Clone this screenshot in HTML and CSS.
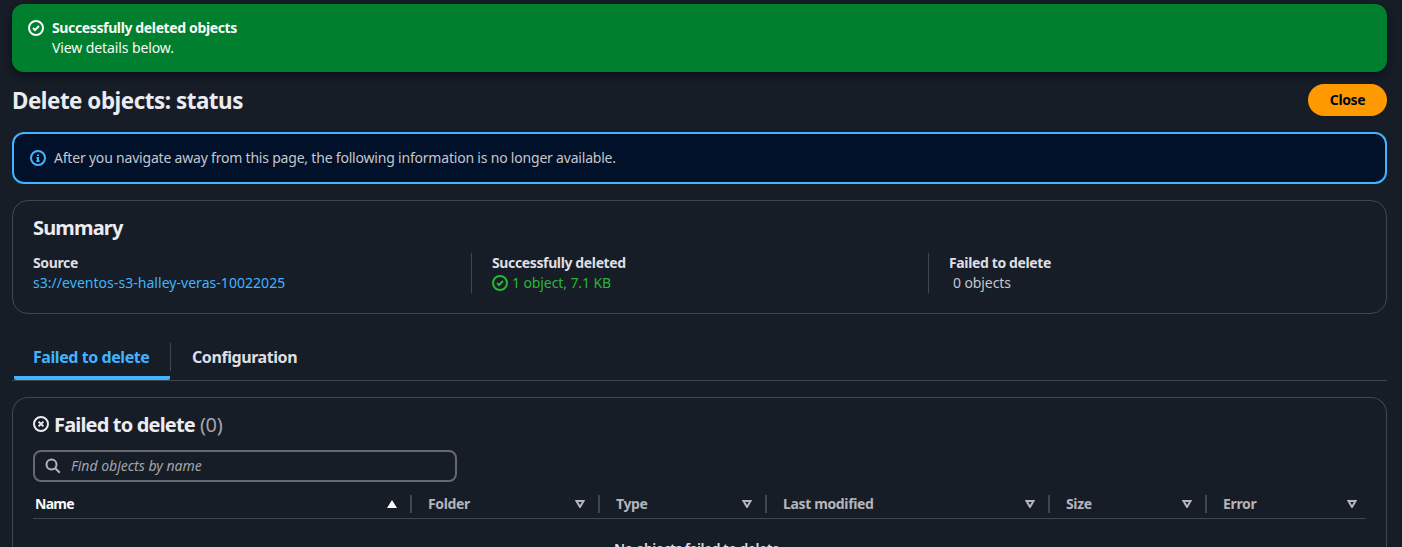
FILE: index.html
```html
<!DOCTYPE html>
<html lang="en">
<head>
<meta charset="utf-8">
<title>Delete objects: status</title>
<link rel="stylesheet" href="styles.css">
</head>
<body>
<main class="page">
  <section class="flash">
    <svg class="icon" viewBox="0 0 16 16"><circle cx="8" cy="8" r="7"/><path d="m5 8 2 2 4-4"/></svg>
    <div>
      <div class="flash-title">Successfully deleted objects</div>
      <div class="flash-text">View details below.</div>
    </div>
  </section>

  <header class="page-header">
    <h1>Delete objects: status</h1>
    <button class="close">Close</button>
  </header>

  <section class="alert">
    <svg class="icon" viewBox="0 0 16 16"><circle cx="8" cy="8" r="7"/><path d="M8 11V8H6.500M6.500 11h3M8 6V4.500"/></svg>
    <span>After you navigate away from this page, the following information is no longer available.</span>
  </section>

  <section class="summary">
    <h2>Summary</h2>
    <div class="facts">
      <div class="fact">
        <div class="label">Source</div>
        <a class="link">s3://eventos-s3-halley-veras-10022025</a>
      </div>
      <div class="fact">
        <div class="label">Successfully deleted</div>
        <div class="success"><svg class="icon" viewBox="0 0 16 16"><circle cx="8" cy="8" r="7"/><path d="m5 8 2 2 4-4"/></svg><span>1 object, 7.1 KB</span></div>
      </div>
      <div class="fact">
        <div class="label">Failed to delete</div>
        <div class="none">0 objects</div>
      </div>
    </div>
  </section>

  <nav class="tabs">
    <div class="tab active">Failed to delete</div>
    <div class="tab">Configuration</div>
  </nav>

  <section class="panel">
    <h2 class="panel-title">
      <svg class="icon" viewBox="0 0 16 16"><circle cx="8" cy="8" r="7"/><path d="m5.600 5.600 4.800 4.800M10.400 5.600l-4.800 4.800"/></svg>
      <span>Failed to delete</span>
      <span class="count">(0)</span>
    </h2>
    <div class="search">
      <svg class="icon" viewBox="0 0 16 16"><circle cx="6.500" cy="6.500" r="5"/><path d="m10.200 10.200 4.600 4.600"/></svg>
      <span>Find objects by name</span>
    </div>
    <div class="thead">
      <div class="th sorted">Name<svg class="arrow" viewBox="0 0 10 8"><path d="M5 0 10 8H0z"/></svg></div>
      <div class="th">Folder<svg class="arrow" viewBox="0 0 10 8"><path d="M1.500 1h7L5 7z"/></svg></div>
      <div class="th">Type<svg class="arrow" viewBox="0 0 10 8"><path d="M1.500 1h7L5 7z"/></svg></div>
      <div class="th">Last modified<svg class="arrow" viewBox="0 0 10 8"><path d="M1.500 1h7L5 7z"/></svg></div>
      <div class="th">Size<svg class="arrow" viewBox="0 0 10 8"><path d="M1.500 1h7L5 7z"/></svg></div>
      <div class="th">Error<svg class="arrow" viewBox="0 0 10 8"><path d="M1.500 1h7L5 7z"/></svg></div>
    </div>
    <div class="empty">No objects failed to delete</div>
  </section>
</main>
</body>
</html>
```

FILE: styles.css
```css
* { box-sizing: border-box; }
body {
  margin: 0;
  height: 547px;
  overflow: hidden;
  background: #161d26;
  color: #c6c6cd;
  font: 14px/20px "Noto Sans", "Open Sans", sans-serif;
  white-space: nowrap;
}
h1, h2 { margin: 0; color: #ebebf0; }
.page { width: 1375px; height: 543px; margin: 4px 0 0 12px; overflow: visible; }
.icon {
  width: 16px;
  height: 16px;
  flex: none;
  fill: none;
  stroke: currentColor;
  stroke-width: 2;
}
.flash {
  display: flex;
  gap: 8px;
  height: 68px;
  padding: 14px 16px;
  border-radius: 12px;
  background: #00802f;
  color: #f9f9fa;
  box-shadow: 0 4px 8px rgba(0, 7, 22, .5);
}
.flash .icon { margin-top: 2px; }
.flash-title { font-weight: 700; letter-spacing: -.37px; }
.flash-text { letter-spacing: -.1px; }
.page-header {
  display: flex;
  justify-content: space-between;
  align-items: center;
  height: 32px;
  margin: 12px 0 16px;
}
h1 {
  font-size: 24px;
  line-height: 30px;
  letter-spacing: -.5px;
  transform: scaleX(.932);
  transform-origin: left;
}
.close {
  width: 79px;
  height: 32px;
  padding: 0;
  border: 0;
  border-radius: 16px;
  background: #ff9900;
  color: #000716;
  font: inherit;
  font-weight: 700;
  letter-spacing: -.4px;
}
.alert {
  display: flex;
  align-items: center;
  gap: 8px;
  height: 52px;
  padding: 0 16px;
  border: 2px solid #42b4ff;
  border-radius: 12px;
  background: #001129;
  letter-spacing: -.2px;
}
.alert .icon { color: #42b4ff; }
.summary {
  height: 114px;
  margin-top: 16px;
  padding: 15px 20px;
  border: 1px solid #424650;
  border-radius: 16px;
}
h2 { font-size: 20px; line-height: 24px; letter-spacing: -.83px; }
.facts { display: grid; grid-template-columns: 438px 457px 1fr; margin-top: 13px; }
.fact { height: 40px; }
.fact + .fact { padding-left: 20px; border-left: 1px solid #424650; }
.label { font-weight: 700; color: #dedee3; letter-spacing: -.37px; }
.link { color: #42b4ff; letter-spacing: .04px; }
.success { display: flex; align-items: center; gap: 4px; color: #2bb534; letter-spacing: -.1px; }
.none { padding-left: 4px; letter-spacing: -.1px; }
.tabs {
  display: flex;
  height: 52px;
  margin-top: 15px;
  border-bottom: 1px solid #424650;
  font-size: 16px;
  font-weight: 700;
  letter-spacing: -.43px;
  color: #dedee3;
}
.tab { display: flex; height: 28px; margin-top: 14px; align-items: center; padding: 0 21px; }
.tab.active {
  width: 156px;
  height: 51px;
  margin: 0 0 0 2px;
  padding: 9px 0 0 19px;
  border-bottom: 4px solid #42b4ff;
  border-radius: 2px;
  color: #42b4ff;
}
.tab + .tab { border-left: 1px solid #424650; padding-left: 21px; }
.panel {
  height: 150px;
  margin-top: 16px;
  padding: 15px 20px 0;
  border: 1px solid #424650;
  border-bottom: 0;
  border-radius: 16px 16px 0 0;
  overflow: hidden;
}
.panel-title { display: flex; gap: 5px; }
.panel-title .icon { margin-top: 3px; }
.count { font-weight: 400; color: #a4a4ad; letter-spacing: -.3px; }
.search {
  display: flex;
  align-items: center;
  gap: 10px;
  width: 424px;
  height: 32px;
  margin-top: 13px;
  padding: 0 10px;
  border: 2px solid #656871;
  border-radius: 8px;
  color: #a4a4ad;
  font-style: italic;
}
.search .icon { color: #b4b4bb; }
.thead {
  display: grid;
  grid-template-columns: 379px 188px 167px 283px 157px 159px;
  height: 37px;
  padding-top: 13px;
  border-bottom: 1px solid #424650;
}
.th {
  display: flex;
  justify-content: space-between;
  align-items: center;
  height: 18px;
  padding: 0 13px 0 16px;
  border-right: 2px solid #424650;
  font-weight: 700;
  letter-spacing: -.36px;
  color: #b4b4bb;
}
.th:first-child { padding-left: 2px; letter-spacing: -.7px; }
.th:last-child { padding-right: 9px; border-right: 0; }
.arrow { width: 10px; height: 8px; fill: none; stroke: currentColor; stroke-width: 2; }
.sorted { color: #f9f9fa; }
.sorted .arrow { fill: currentColor; stroke: none; }
.empty { margin-top: 20px; padding-left: 581px; font-weight: 600; letter-spacing: -.5px; color: #dedee3; }
```
